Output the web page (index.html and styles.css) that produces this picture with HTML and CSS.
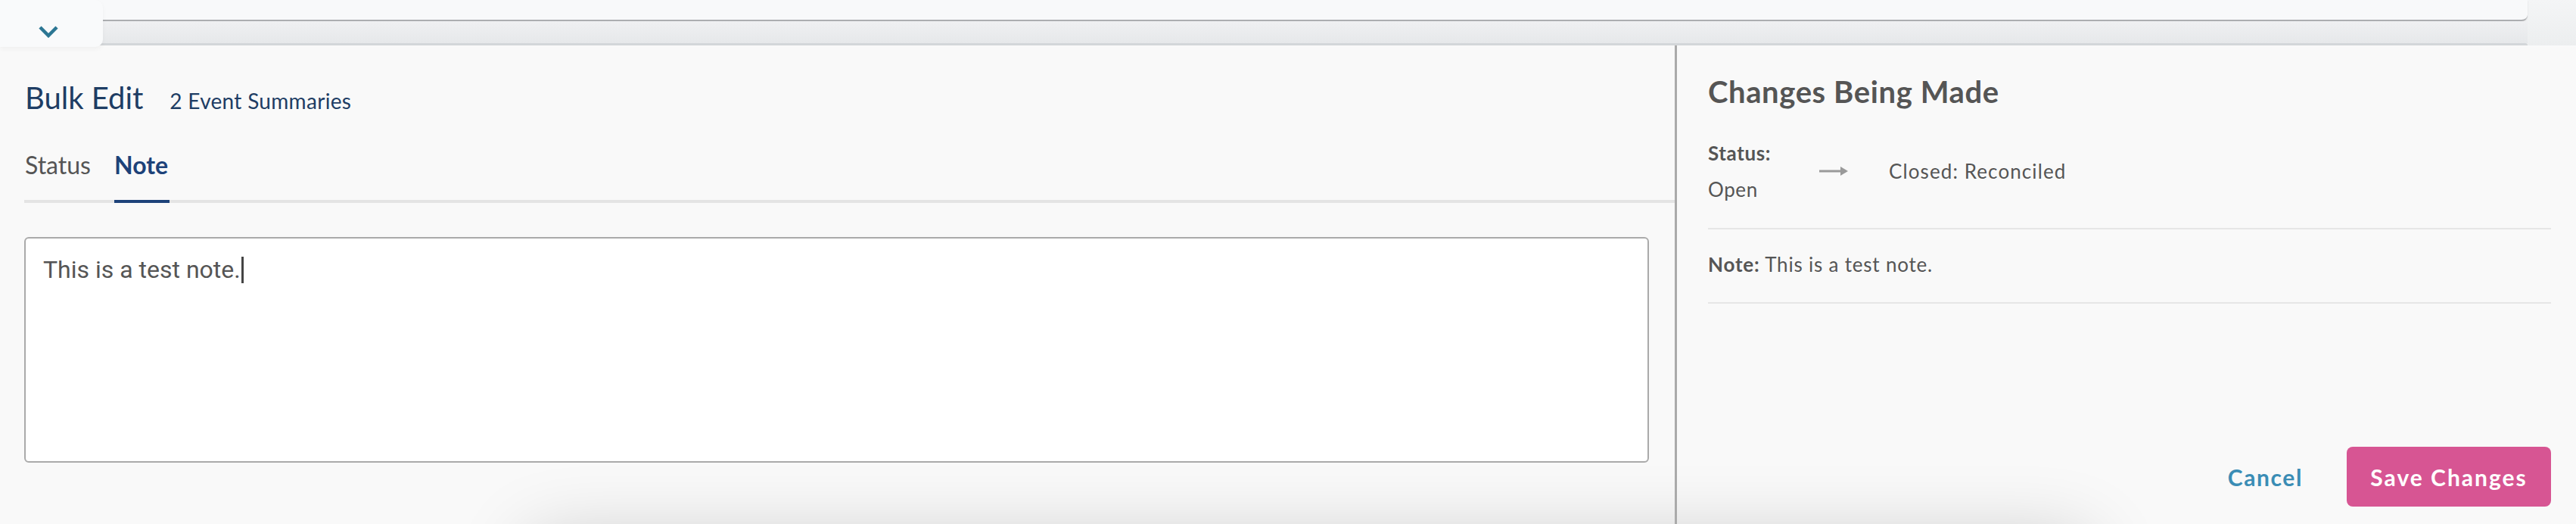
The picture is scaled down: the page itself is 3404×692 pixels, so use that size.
FILE: index.html
```html
<!DOCTYPE html>
<html lang="en">
<head>
<meta charset="utf-8">
<title>Bulk Edit</title>
<link rel="stylesheet" href="styles.css">
</head>
<body>
<div class="page">
  <div class="backdrop">
    <div class="bg-card"></div>
    <div class="bg-gap"></div>
    <div class="bg-card-edge"></div>
  </div>
  <button class="drawer-toggle" aria-label="Collapse">
    <svg width="26" height="16" viewBox="0 0 26 16"><polyline points="2,2 13,13 24,2" fill="none" stroke="#2c7693" stroke-width="4.5" stroke-linecap="butt" stroke-linejoin="miter"/></svg>
  </button>
  <div class="panel">
    <section class="editor">
      <header class="editor-head">
        <h1 class="editor-title">Bulk Edit</h1>
        <span class="editor-count">2 Event Summaries</span>
      </header>
      <nav class="tabs">
        <span class="tab">Status</span>
        <span class="tab tab-active">Note</span>
      </nav>
      <div class="note-box">This is a test note.<span class="caret"></span></div>
    </section>
    <div class="divider"></div>
    <aside class="summary">
      <h2 class="summary-title">Changes Being Made</h2>
      <div class="change-row">
        <div class="change-old">
          <div class="change-label">Status:</div>
          <div class="change-value">Open</div>
        </div>
        <svg class="change-arrow" width="38" height="12" viewBox="0 0 38 12"><rect x="0" y="4.5" width="30" height="3" fill="#9a9a9a"/><polygon points="28,0 38,6 28,12" fill="#9a9a9a"/></svg>
        <div class="change-new">Closed: Reconciled</div>
      </div>
      <div class="change-note"><b>Note:</b> This is a test note.</div>
      <div class="actions">
        <button class="btn-cancel">Cancel</button>
        <button class="btn-save">Save Changes</button>
      </div>
    </aside>
  </div>
</div>
</body>
</html>
```
FILE: styles.css
```css
* { box-sizing: border-box; }
html, body { margin: 0; padding: 0; }
body {
  width: 3404px;
  height: 692px;
  overflow: hidden;
  background: #f9f9f9;
  font-family: Lato, "Liberation Sans", sans-serif;
}
.page {
  position: relative;
  width: 3404px;
  height: 692px;
  display: flex;
  flex-direction: column;
}
.backdrop {
  height: 60px;
  display: flex;
  flex-direction: column;
  background: linear-gradient(to bottom, #f4f5f6, #eceeef);
}
.bg-card {
  width: 3340px;
  height: 28px;
  background: #f8f9fa;
  border-bottom: 2px solid #acaeb1;
  border-bottom-right-radius: 8px;
  box-shadow: 0 1px 2px rgba(0,0,0,0.12);
}
.bg-gap {
  width: 3340px;
  height: 29px;
  background: linear-gradient(to bottom, #eff0f2, #e6e8ea);
}
.bg-card-edge {
  width: 3340px;
  height: 3px;
  background: #d3d6d9;
  border-top-right-radius: 6px;
}
.drawer-toggle {
  position: absolute;
  left: 0;
  top: 0;
  width: 136px;
  height: 62px;
  padding: 34px 8px 0 0;
  margin: 0;
  border: 0;
  background: #f9fafb;
  border-radius: 0 10px 10px 0;
  box-shadow: 0 3px 6px rgba(0,0,0,0.04);
  display: flex;
  justify-content: center;
  align-items: flex-start;
  z-index: 3;
}
.panel {
  position: relative;
  flex: 1;
  display: grid;
  grid-template-columns: 2213px 3px 1fr;
  overflow: hidden;
  background: #f9f9f9;
}
.panel::before {
  content: "";
  position: absolute;
  left: 700px;
  width: 2060px;
  top: 652px;
  height: 100px;
  box-shadow: 0 0 100px rgba(0,0,0,0.2);
  background: #e0e0e0;
  z-index: 0;
}
.editor {
  position: relative;
  z-index: 1;
  padding: 45px 0 0 32px;
}
.editor-head {
  display: flex;
  align-items: baseline;
  gap: 35px;
  margin-left: 1px;
}
.editor-title {
  margin: 0;
  font-size: 40px;
  line-height: 48px;
  font-weight: 400;
  color: #1e3d64;
}
.editor-count {
  font-size: 28px;
  letter-spacing: 0.3px;
  color: #1e3d64;
}
.tabs {
  margin-top: 45px;
  display: flex;
  gap: 31px;
  padding-left: 1px;
  border-bottom: 4px solid #e4e4e4;
}
.tab {
  font-size: 32px;
  line-height: 40px;
  padding-bottom: 26px;
  color: #555;
}
.tab-active {
  font-weight: 700;
  color: #1d4279;
  border-bottom: 4px solid #1d4279;
  margin-bottom: -4px;
  padding-right: 2px;
}
.note-box {
  margin-top: 45px;
  width: 2147px;
  height: 298px;
  background: #fff;
  border: 2px solid #aaa;
  border-radius: 6px;
  padding: 23px 23px;
  font-family: Roboto, "Liberation Sans", sans-serif;
  font-size: 32px;
  color: #555;
  line-height: 37px;
}
.caret {
  display: inline-block;
  width: 3px;
  height: 35px;
  background: #444;
  vertical-align: -7px;
  margin-left: 1px;
}
.divider {
  position: relative;
  z-index: 1;
  background: #aaa;
}
.summary {
  position: relative;
  z-index: 1;
  padding: 37px 33px 23px 41px;
  display: flex;
  flex-direction: column;
  color: #555;
}
.summary-title {
  margin: 0;
  font-size: 40px;
  line-height: 48px;
  font-weight: 700;
  letter-spacing: 0.6px;
  color: #555;
}
.change-row {
  margin-top: 33px;
  display: flex;
  align-items: center;
  padding-bottom: 27px;
  border-bottom: 2px solid #e6e6e6;
}
.change-old {
  width: 147px;
  font-size: 26px;
  line-height: 48px;
  letter-spacing: 0.6px;
}
.change-label { font-weight: 700; }
.change-arrow { display: block; flex: none; }
.change-new {
  margin-left: 54px;
  font-size: 26px;
  line-height: 48px;
  letter-spacing: 1.1px;
}
.change-note {
  margin-top: 22px;
  font-size: 26px;
  line-height: 48px;
  letter-spacing: 0.8px;
  padding-bottom: 26px;
  border-bottom: 2px solid #e6e6e6;
}
.change-note b { font-weight: 700; }
.actions {
  margin-top: auto;
  display: flex;
  justify-content: flex-end;
  align-items: center;
  gap: 58px;
}
.btn-cancel {
  border: 0;
  background: none;
  padding: 0;
  font-family: inherit;
  font-size: 30px;
  font-weight: 700;
  letter-spacing: 1.6px;
  color: #3b8db5;
}
.btn-save {
  width: 270px;
  height: 79px;
  border: 0;
  border-radius: 8px;
  background: #d75593;
  color: #fff;
  font-family: inherit;
  font-size: 30px;
  font-weight: 700;
  letter-spacing: 2px;
}
```
